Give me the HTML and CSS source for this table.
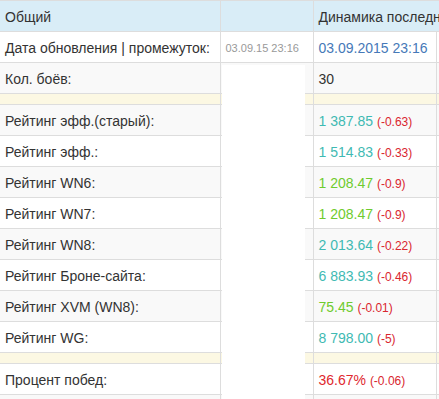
FILE: index.html
```html
<!DOCTYPE html>
<html>
<head>
<meta charset="utf-8">
<link rel="stylesheet" href="styles.css">
</head>
<body>
<div class="wrap">
<table class="stats">
  <colgroup>
    <col class="c1"><col class="c2"><col class="c3"><col class="c4">
  </colgroup>
  <tbody>
    <tr class="info"><td>Общий</td><td></td><td colspan="2" class="nowrap">Динамика последних боёв</td></tr>
    <tr><td class="nowrap">Дата обновления | промежуток:</td><td class="small-date">03.09.15 23:16</td><td class="date">03.09.2015 23:16</td><td></td></tr>
    <tr><td>Кол. боёв:</td><td></td><td>30</td><td></td></tr>
    <tr class="warn"><td></td><td></td><td></td><td></td></tr>
    <tr><td>Рейтинг эфф.(старый):</td><td></td><td><span class="teal">1 387.85</span> <span class="neg">(-0.63)</span></td><td></td></tr>
    <tr><td>Рейтинг эфф.:</td><td></td><td><span class="teal">1 514.83</span> <span class="neg">(-0.33)</span></td><td></td></tr>
    <tr><td>Рейтинг WN6:</td><td></td><td><span class="green">1 208.47</span> <span class="neg">(-0.9)</span></td><td></td></tr>
    <tr><td>Рейтинг WN7:</td><td></td><td><span class="green">1 208.47</span> <span class="neg">(-0.9)</span></td><td></td></tr>
    <tr><td>Рейтинг WN8:</td><td></td><td><span class="teal">2 013.64</span> <span class="neg">(-0.22)</span></td><td></td></tr>
    <tr><td>Рейтинг Броне-сайта:</td><td></td><td><span class="teal">6 883.93</span> <span class="neg">(-0.46)</span></td><td></td></tr>
    <tr><td>Рейтинг XVM (WN8):</td><td></td><td><span class="green">75.45</span> <span class="neg">(-0.01)</span></td><td></td></tr>
    <tr><td>Рейтинг WG:</td><td></td><td><span class="teal">8 798.00</span> <span class="neg">(-5)</span></td><td></td></tr>
    <tr class="warn"><td></td><td></td><td></td><td></td></tr>
    <tr><td>Процент побед:</td><td></td><td><span class="red">36.67%</span> <span class="neg">(-0.06)</span></td><td></td></tr>
    <tr><td>&nbsp;</td><td></td><td></td><td></td></tr>
  </tbody>
</table>
<div class="mask"></div>
</div>
</body>
</html>
```

FILE: styles.css
```css
html, body {
  margin: 0;
  padding: 0;
  background: #fff;
}
body {
  font-family: "Liberation Sans", Arial, sans-serif;
  font-size: 14px;
  line-height: 20px;
  color: #333;
  overflow: hidden;
  width: 439px;
  height: 399px;
}
.wrap {
  position: relative;
  width: 439px;
  height: 399px;
  overflow: hidden;
}
.stats {
  border-collapse: collapse;
  table-layout: fixed;
  width: 600px;
}
.c1 { width: 220px; }
.c2 { width: 93px; }
.c3 { width: 123px; }
.c4 { width: 164px; }
.stats td {
  padding: 6px 5px 4px;
  height: 20px;
  border-top: 1px solid #ddd;
  border-left: 1px solid #ddd;
  vertical-align: top;
  overflow: hidden;
}
.stats tr.warn td {
  height: 0;
  padding: 5px;
  background: #fcf8e3;
}
.stats td:first-child {
  border-left: none;
}
.stats tr:nth-child(odd) td { background: #f9f9f9; }
.stats tr.info td { background: #d9edf7; }
.stats tr.warn td { background: #fcf8e3; }
.nowrap { white-space: nowrap; }
.small-date {
  font-size: 11px;
  color: #999;
  white-space: nowrap;
}
.date { color: #4679b8; white-space: nowrap; }
.teal { color: #3fbab3; }
.green { color: #6fcb2e; }
.red { color: #e0282f; }
.neg { color: #d9262f; font-size: 12px; line-height: 12px; }
.stats td:nth-child(3) { white-space: nowrap; }
.mask {
  position: absolute;
  left: 222px;
  top: 65px;
  width: 83px;
  height: 400px;
  background: #fff;
}
```
